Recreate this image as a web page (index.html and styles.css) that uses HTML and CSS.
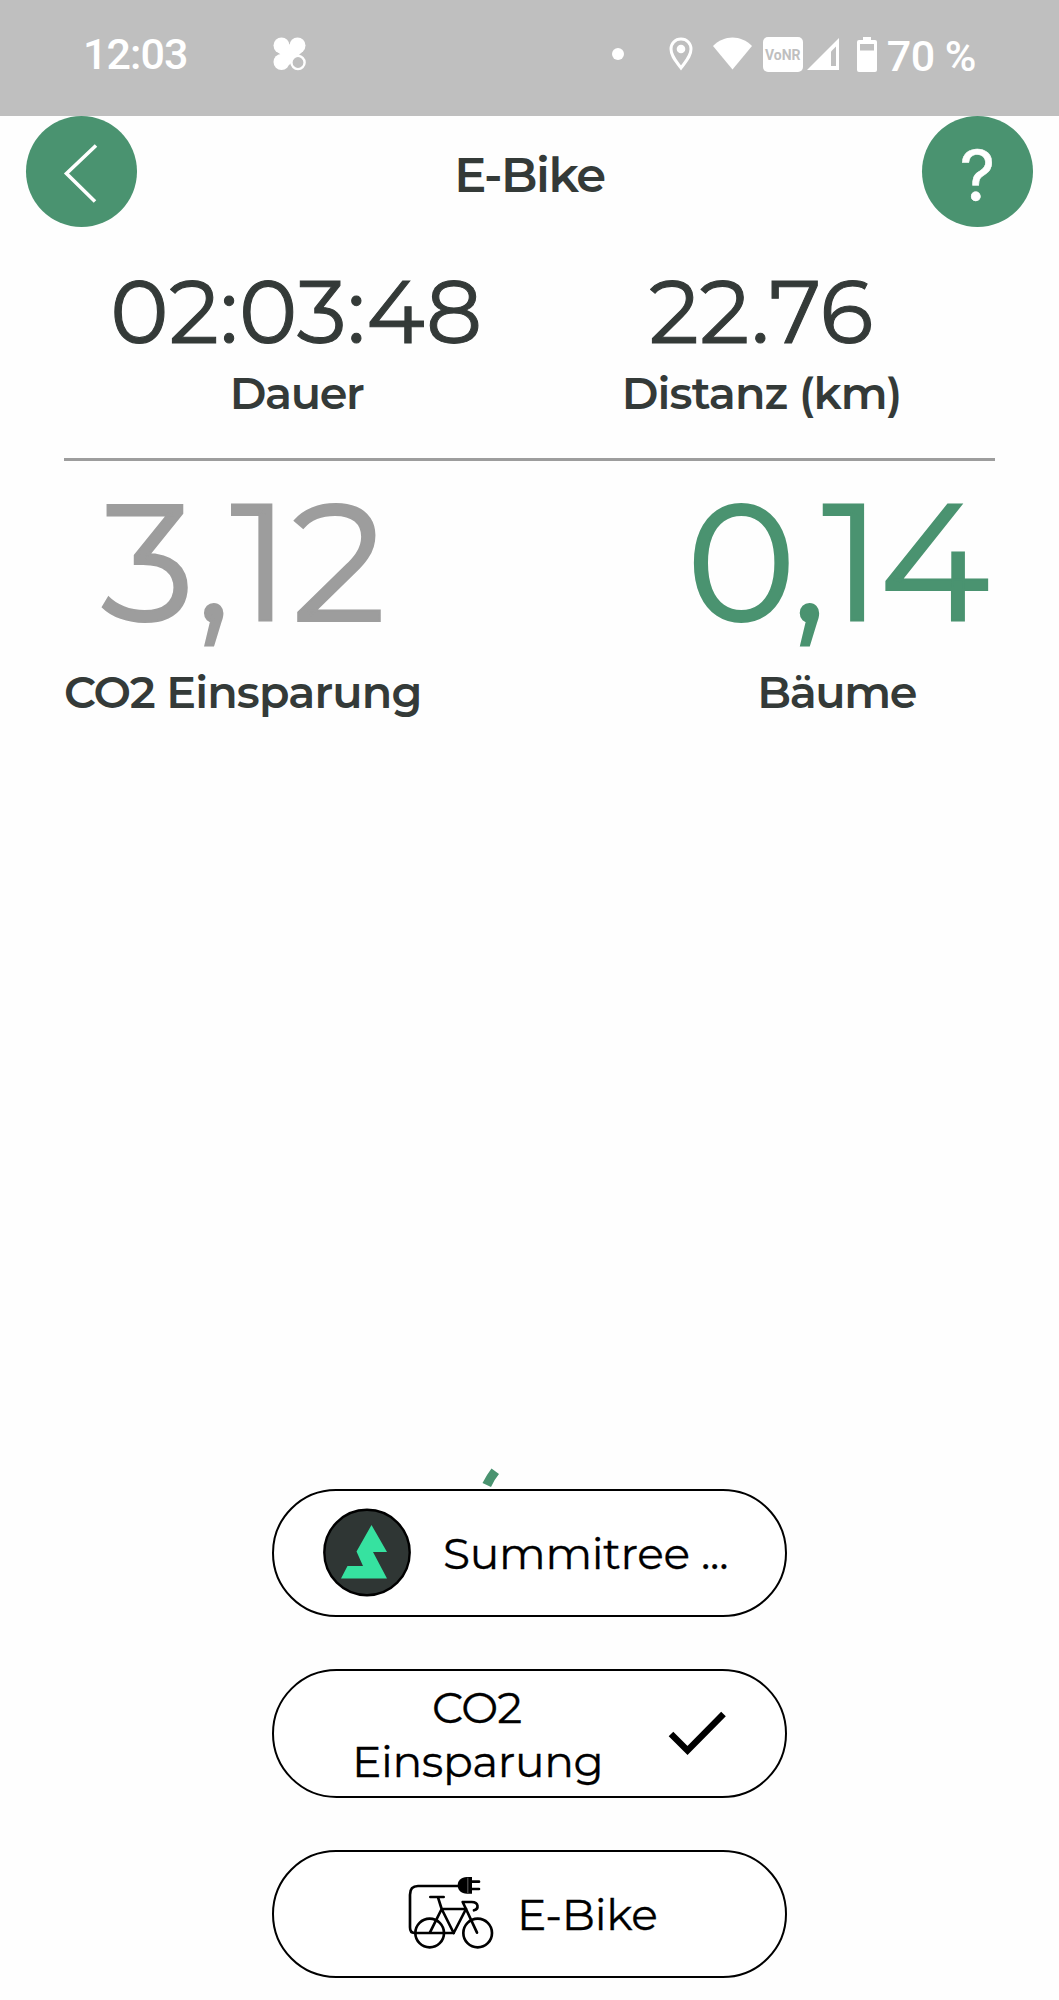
FILE: index.html
```html
<!DOCTYPE html>
<html lang="de">
<head>
  <meta charset="UTF-8">
  <meta name="viewport" content="width=device-width, initial-scale=1.0">
  <title>E-Bike</title>
  <link rel="stylesheet" href="styles.css">
</head>
<body>
  <div class="statusbar">
    <span class="clock">12:03</span>
    <svg class="clover" width="33" height="34" viewBox="0 0 33 34">
      <g fill="#fff">
        <circle cx="8.5" cy="8.5" r="8"/>
        <circle cx="24.5" cy="8.5" r="8"/>
        <circle cx="8.5" cy="25" r="8"/>
        <path d="M12 5l4.500 2.500 4.500-2.500 9 9-4 4-10 10-10-12z"/>
      </g>
      <circle cx="25" cy="25.500" r="6.600" fill="#bfbfbf" stroke="#fff" stroke-width="2.400"/>
    </svg>
    <div class="status-icons">
      <span class="dot"></span>
      <svg class="pin" width="24" height="34" viewBox="0 0 24 34">
        <path d="M12 2C6 2 2 6.500 2 12c0 7 5 12 10 19 5-7 10-12 10-19C22 6.500 18 2 12 2z" fill="none" stroke="#fff" stroke-width="3"/>
        <circle cx="12" cy="12" r="4.300" fill="#fff"/>
      </svg>
      <svg class="wifi" width="39" height="34" viewBox="0 0 39 34">
        <path d="M0 9C11-2.500 28-2.500 39 9L19.500 32.500z" fill="#fff"/>
      </svg>
      <span class="vonr">VoNR</span>
      <svg class="signal" width="32" height="34" viewBox="0 0 32 34">
        <path d="M32 1v32H0z" fill="#fff"/>
        <path d="M24 14.500l5-5v19.500h-5z" fill="#bfbfbf"/>
      </svg>
      <svg class="battery" width="20" height="35" viewBox="0 0 20 35">
        <path d="M6 0h8v3h4q2 0 2 2v28q0 2-2 2H2q-2 0-2-2V5q0-2 2-2h4z" fill="#fff"/>
        <path d="M3 7h14v6.500H3z" fill="#bfbfbf"/>
      </svg>
      <span class="percent">70 %</span>
    </div>
  </div>

  <header>
    <button class="round">
      <svg width="111" height="111" viewBox="0 0 111 111">
        <path d="M70 29.500L40.500 57.500l28.500 28" fill="none" stroke="#fff" stroke-width="3.600"/>
      </svg>
    </button>
    <h1>E-Bike</h1>
    <button class="round help">?</button>
  </header>

  <section class="ride">
    <div class="stat">
      <div class="value">02:03:48</div>
      <div class="label tight">Dauer</div>
    </div>
    <div class="stat">
      <div class="value">22.76</div>
      <div class="label">Distanz (km)</div>
    </div>
  </section>
  <hr>
  <section class="savings">
    <div class="stat">
      <div class="value co2">3,12</div>
      <div class="label">CO2 Einsparung</div>
    </div>
    <div class="stat">
      <div class="value trees">0,14</div>
      <div class="label tight">Bäume</div>
    </div>
  </section>

  <div class="actions">
    <svg class="leaf" width="18" height="20" viewBox="0 0 18 20">
      <path d="M9.500 0.500l7.500 5.500q-5 6-8 13L0.500 15q4-8 9-14.500z" fill="#4a9370"/>
    </svg>
    <button class="pill">
      <svg width="88" height="89" viewBox="0 0 88 89">
        <circle cx="44" cy="44.500" r="42.700" fill="#2f3634" stroke="#000" stroke-width="2.400"/>
        <path d="M48.500 17l15.500 27H50L64 70.500H18L24.500 58h15.500L33.500 43.500z" fill="#36e2a0"/>
      </svg>
      <span class="name">Summitree ...</span>
    </button>
    <button class="pill choice">
      <span class="two-lines">CO2<br>Einsparung</span>
      <svg width="58" height="46" viewBox="0 0 58 46">
        <path d="M3 24L19.500 40.500 55.500 4" fill="none" stroke="#000" stroke-width="6.500"/>
      </svg>
    </button>
    <button class="pill bike">
      <svg width="86" height="75" viewBox="26 34 258 225">
        <g fill="none" stroke="#000" stroke-width="8" stroke-linejoin="round" stroke-linecap="round">
          <circle cx="91" cy="205" r="43"/>
          <circle cx="235" cy="205" r="43"/>
          <path d="M163 205H45Q32 205 32 188V90Q32 64 56 64H180"/>
          <path d="M93 97h40M116 98l11 35 36 72 37-72h-73l-35 70"/>
          <path d="M233 204l-33-71-10-21h27c22 0 22 21 7 25"/>
          <path d="M218 51h21M218 73h21"/>
        </g>
        <path d="M218 37h-15c-18 0-28 11-28 25s10 25 28 25h15z"/>
        <path d="M205.500 39v46" stroke="#999" stroke-width="2"/>
      </svg>
      <span>E-Bike</span>
    </button>
  </div>
</body>
</html>
```
FILE: styles.css
```css
* { box-sizing: border-box; }
body { display: flex; flex-direction: column; height: 2000px; margin: 0; background: #fefefe; color: #343a38; font-family: Montserrat, Inter, sans-serif; }
svg { display: block; flex: none; }
button { padding: 0; border: none; font-family: inherit; cursor: pointer; }

.statusbar { display: flex; align-items: center; height: 116px; padding: 0 83px 8px 83px; background: #bfbfbf; color: #fff; font: 500 43px Roboto, sans-serif; }
.clock { width: 109px; margin-top: -1px; letter-spacing: -0.9px; }
.clover { margin-left: 81px; }
.status-icons { display: flex; align-items: center; margin-left: auto; }
.dot { width: 12px; height: 12px; border-radius: 50%; background: #fff; }
.pin { margin-left: 45px; }
.wifi { margin-left: 20px; }
.vonr { width: 40px; height: 35px; margin-left: 11px; border-radius: 5px; background: #fff; color: #bfbfbf; font-size: 14px; font-weight: 700; line-height: 36px; text-align: center; }
.signal { margin-left: 4px; }
.battery { margin-left: 18px; }
.percent { margin: 3px 0 0 10px; letter-spacing: -0.5px; }

header { display: flex; justify-content: space-between; height: 111px; padding: 0 26px 0 26px; }
h1 { margin: 0; padding-top: 4px; font-size: 48px; font-weight: 600; line-height: 111px; letter-spacing: -1.5px; }
.round { width: 111px; height: 111px; border-radius: 50%; background: #4a9370; }
.help { padding-top: 9px; color: #fff; font-family: Inter, sans-serif; font-size: 70px; font-weight: 400; line-height: 102px; -webkit-text-stroke: 0.5px; }

.stat { text-align: center; }
.value { font-size: 88px; font-weight: 400; line-height: 90px; letter-spacing: 0.6px; -webkit-text-stroke: 0.012em; }
.label { font-size: 44.500px; font-weight: 600; line-height: 54px; letter-spacing: -0.85px; }
.tight { letter-spacing: -1.4px; }
.ride { display: grid; grid-template-columns: 1fr 1fr; padding: 40px 65px 38px 64px; }
.ride .label { margin-top: 9px; }
hr { width: 931px; height: 3px; margin: 0 64px; border: none; background: #9d9d9d; }
.savings { display: flex; justify-content: space-between; padding: 21px 72px 0 64px; }
.savings .value { font-size: 166px; line-height: 160px; }
.savings .label { margin-top: 23px; }
.savings .trees { color: #4a9370; letter-spacing: -2.500px; }
.savings .co2 { padding-left: 3px; color: #9d9d9d; letter-spacing: 1.300px; }

.actions { position: relative; display: flex; flex-direction: column; gap: 52px; width: 515px; margin: auto auto 22px 272px; }
.leaf { position: absolute; left: 210px; top: -21px; }
.pill { display: flex; align-items: center; height: 128.500px; padding-left: 49px; border: 2.500px solid #000; border-radius: 65px; background: #fff; color: #000; font-size: 44px; font-weight: 400; line-height: 54px; letter-spacing: -0.3px; white-space: nowrap; -webkit-text-stroke: 0.3px; }
.name { margin-left: 32px; }
.choice { padding-left: 78px; }
.two-lines { width: 250px; padding-top: 2px; text-align: center; letter-spacing: -0.4px; }
.choice svg { margin-left: 66px; }
.bike { gap: 23px; padding-left: 134px; }
```
